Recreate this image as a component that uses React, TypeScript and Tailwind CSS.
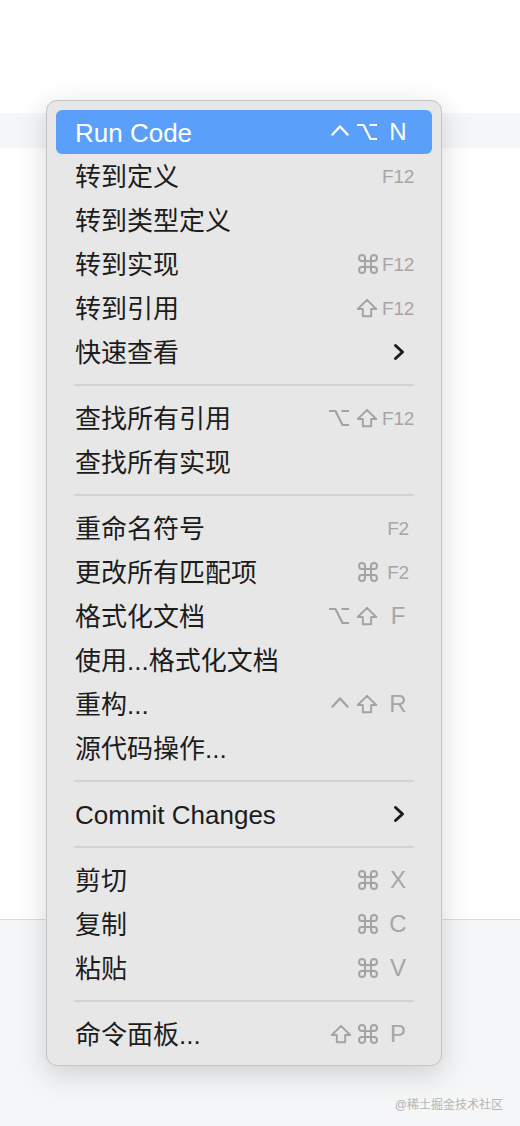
import React from "react";

type Mod = "cmd" | "shift" | "opt" | "ctrl";

const Cmd = () => (
  <svg width="20" height="20" viewBox="2 2 20 20" fill="none" stroke="currentColor" strokeWidth="2" strokeLinecap="round" strokeLinejoin="round">
    <path d="M15 6v12a3 3 0 1 0 3-3H6a3 3 0 1 0 3 3V6a3 3 0 1 0-3 3h12a3 3 0 1 0-3-3" />
  </svg>
);
const Shift = () => (
  <svg width="22" height="20" viewBox="0 0 22 20" fill="none" stroke="currentColor" strokeWidth="1.9" strokeLinejoin="round">
    <path d="M11 1.8 L20.2 11 H15.2 V18.2 H6.8 V11 H1.8 Z" />
  </svg>
);
const Opt = () => (
  <svg width="22" height="18" viewBox="0 0 22 18" fill="none" stroke="currentColor" strokeWidth="2.2" strokeLinejoin="round">
    <path d="M1 2 H7.5 L14.5 16 H21 M13.5 2 H21" />
  </svg>
);
const Ctrl = () => (
  <svg width="20" height="20" viewBox="0 0 20 20" fill="none" stroke="currentColor" strokeWidth="2.4" strokeLinejoin="round" strokeLinecap="round">
    <path d="M2.5 12.5 L10 4.5 L17.5 12.5" />
  </svg>
);
const Chevron = () => (
  <svg width="14" height="18" viewBox="0 0 14 18" fill="none" stroke="currentColor" strokeWidth="3" strokeLinecap="round" strokeLinejoin="round">
    <path d="M3.5 2.5 L10.5 9 L3.5 15.5" />
  </svg>
);

const modIcon = (m: Mod) =>
  m === "cmd" ? <Cmd /> : m === "shift" ? <Shift /> : m === "opt" ? <Opt /> : <Ctrl />;

type Item = {
  label: string;
  mods?: Mod[];
  keyName?: string;
  small?: boolean;
  sub?: boolean;
  active?: boolean;
};

type Entry = Item | "sep";

const entries: Entry[] = [
  { label: "Run Code", mods: ["ctrl", "opt"], keyName: "N", active: true },
  { label: "转到定义", keyName: "F12", small: true },
  { label: "转到类型定义" },
  { label: "转到实现", mods: ["cmd"], keyName: "F12", small: true },
  { label: "转到引用", mods: ["shift"], keyName: "F12", small: true },
  { label: "快速查看", sub: true },
  "sep",
  { label: "查找所有引用", mods: ["opt", "shift"], keyName: "F12", small: true },
  { label: "查找所有实现" },
  "sep",
  { label: "重命名符号", keyName: "F2", small: true },
  { label: "更改所有匹配项", mods: ["cmd"], keyName: "F2", small: true },
  { label: "格式化文档", mods: ["opt", "shift"], keyName: "F" },
  { label: "使用...格式化文档" },
  { label: "重构...", mods: ["ctrl", "shift"], keyName: "R" },
  { label: "源代码操作..." },
  "sep",
  { label: "Commit Changes", sub: true },
  "sep",
  { label: "剪切", mods: ["cmd"], keyName: "X" },
  { label: "复制", mods: ["cmd"], keyName: "C" },
  { label: "粘贴", mods: ["cmd"], keyName: "V" },
  "sep",
  { label: "命令面板...", mods: ["shift", "cmd"], keyName: "P" },
];

function Row({ item }: { item: Item }) {
  const active = !!item.active;
  return (
    <div
      className={
        "h-[44px] mx-[9px] pl-[19px] pr-[18px] flex items-center justify-between rounded-[6px] " +
        (active ? "bg-[#5aa0fb] text-white" : "text-[#1c1c1c]")
      }
    >
      <span className="text-[26px] leading-none whitespace-nowrap pt-[2px]">{item.label}</span>
      <div className="flex items-center">
        {item.mods && (
          <div className={"flex items-center gap-[6px] mr-[4px] " + (active ? "text-white" : "text-[#a3a3a3]")}>
            {item.mods.map((m, i) => (
              <span key={i} className="flex items-center">
                {modIcon(m)}
              </span>
            ))}
          </div>
        )}
        {(item.keyName || item.sub) && (
          <div className="w-[32px] flex items-center justify-center">
            {item.sub ? (
              <span className="text-[#1c1c1c] flex items-center pl-[2px]">
                <Chevron />
              </span>
            ) : (
              <span
                className={
                  (item.small ? "text-[19px] tracking-[-0.3px] " : "text-[24px] ") +
                  "leading-none " +
                  (active ? "text-white" : "text-[#a6a6a6]")
                }
              >
                {item.keyName}
              </span>
            )}
          </div>
        )}
      </div>
    </div>
  );
}

export default function App() {
  return (
    <div
      className="relative w-[520px] h-[1126px] bg-white overflow-hidden flex flex-col"
      style={{ fontFamily: '"Liberation Sans", "Noto Sans CJK SC", sans-serif' }}
    >
      <div className="h-[113px] shrink-0" />
      <div className="h-[35px] shrink-0 bg-[#f5f6f7]" />
      <div className="h-[771px] shrink-0" />
      <div className="h-px shrink-0 bg-[#dcdddf]" />
      <div className="flex-1 bg-[#f5f6f7] flex items-end justify-end pr-[17px] pb-[15px]">
        <span className="text-[12px] leading-none text-[#b4b4b4]">@稀土掘金技术社区</span>
      </div>

      <div className="absolute left-[46px] top-[100px] w-[396px] rounded-[11px] border border-[#c4c4c4] bg-[#e7e7e7] py-[9px] shadow-[0_8px_30px_rgba(0,0,0,0.16)]">
        {entries.map((e, i) =>
          e === "sep" ? (
            <div key={i} className="h-[22px] mx-[27px] flex items-center">
              <div className="h-[2px] w-full bg-[#d3d3d3]" />
            </div>
          ) : (
            <Row key={i} item={e} />
          )
        )}
      </div>
    </div>
  );
}
